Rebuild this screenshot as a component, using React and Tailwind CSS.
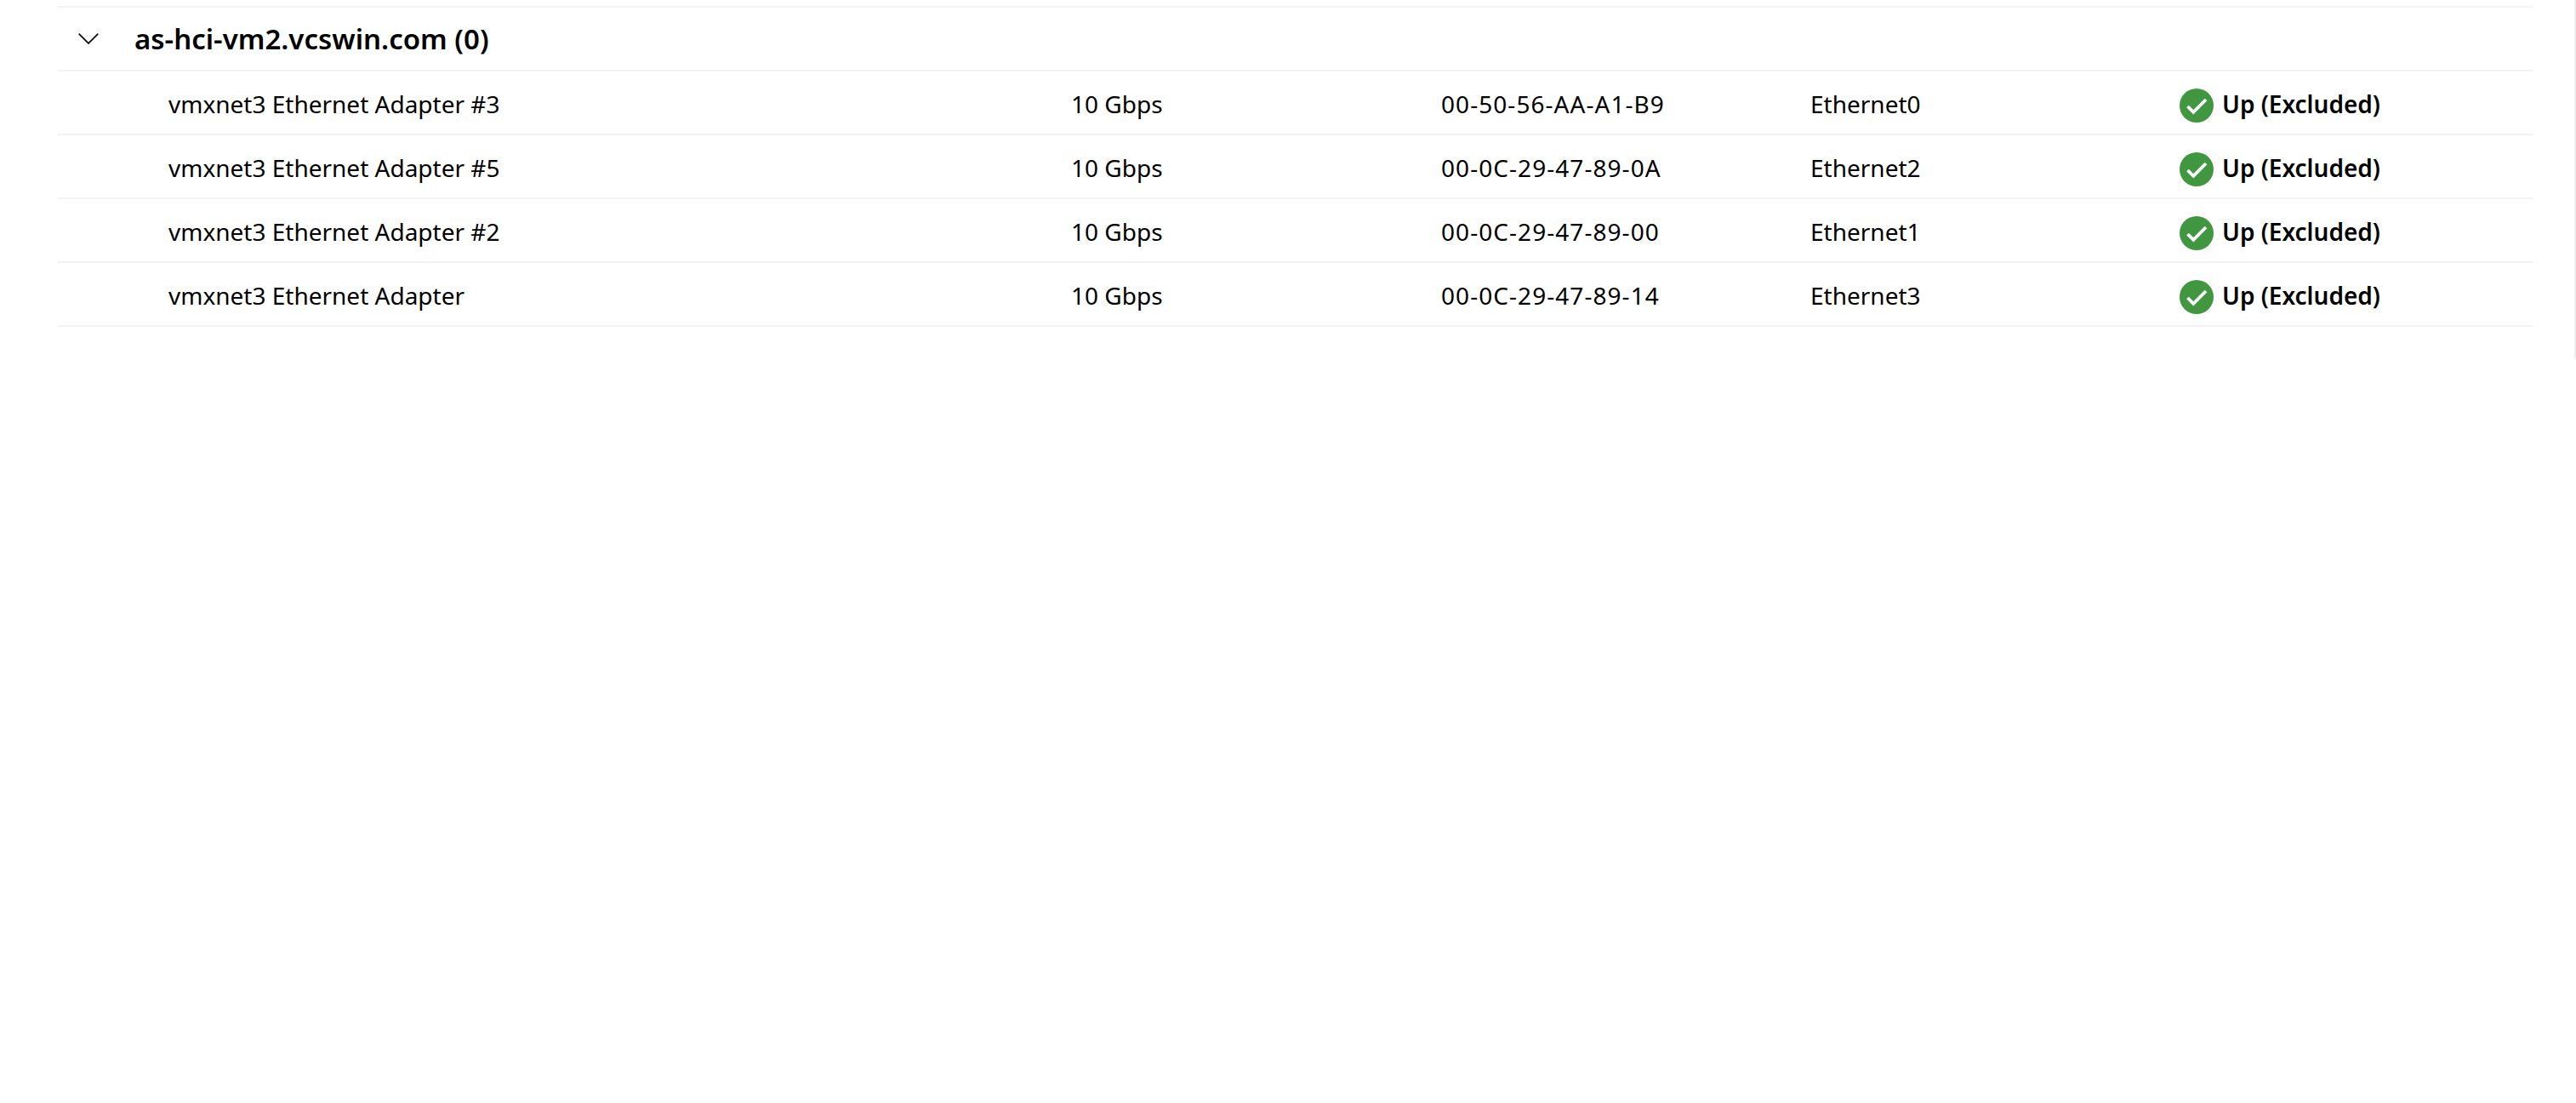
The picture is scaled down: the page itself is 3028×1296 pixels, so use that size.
const adapters = [
  { name: "vmxnet3 Ethernet Adapter #3", speed: "10 Gbps", mac: "00-50-56-AA-A1-B9", iface: "Ethernet0" },
  { name: "vmxnet3 Ethernet Adapter #5", speed: "10 Gbps", mac: "00-0C-29-47-89-0A", iface: "Ethernet2" },
  { name: "vmxnet3 Ethernet Adapter #2", speed: "10 Gbps", mac: "00-0C-29-47-89-00", iface: "Ethernet1" },
  { name: "vmxnet3 Ethernet Adapter", speed: "10 Gbps", mac: "00-0C-29-47-89-14", iface: "Ethernet3" },
];

function StatusIcon() {
  return (
    <svg width="40" height="40" viewBox="0 0 40 40" className="shrink-0">
      <circle cx="20" cy="20" r="20" fill="#41973f" />
      <path d="M9.5 21 L16.3 27.8 L31 13" fill="none" stroke="#fff" strokeWidth="3.8" />
    </svg>
  );
}

export default function App() {
  return (
    <div className="relative h-[1296px] w-[3028px] overflow-hidden bg-white font-['Noto_Sans',sans-serif] text-[28px] text-black">
      {/* scrollbar thumb */}
      <div className="absolute right-0 top-0 h-[422px] w-[2px] bg-[#f0f0f0]" />
      <div className="ml-[68px] w-[2909px] pt-[7px]">
        <div className="flex h-[77px] items-center border-y-2 border-[#f3f3f3] pl-[24px] text-[33px] font-semibold">
          <svg width="24" height="14" viewBox="0 0 24 14" className="mr-[42px] shrink-0">
            <path d="M0.7 0.7 L12 12 L23.3 0.7" fill="none" stroke="#111" strokeWidth="1.8" />
          </svg>
          as-hci-vm2.vcswin.com (0)
        </div>
        {adapters.map((a) => (
          <div
            key={a.name}
            className="grid h-[75px] grid-cols-[1061px_435px_434px_434px_1fr] items-center border-b-2 border-[#f3f3f3] pl-[130px] pt-[6px]"
          >
            <div className="pb-[3px]">{a.name}</div>
            <div className="pb-[3px]">{a.speed}</div>
            <div className="pb-[3px] tracking-[1.05px]">{a.mac}</div>
            <div className="pb-[3px]">{a.iface}</div>
            <div className="flex items-center gap-[10px] font-semibold">
              <StatusIcon />
              <span className="pb-[3px]">Up (Excluded)</span>
            </div>
          </div>
        ))}
      </div>
    </div>
  );
}
